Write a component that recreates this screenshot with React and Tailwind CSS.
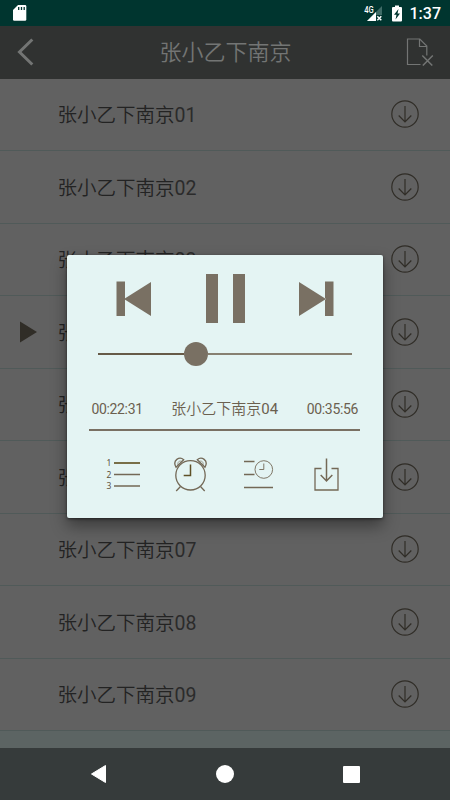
// Audio book chapter list with the playback dialog open
import React from 'react';

const TITLE = '张小乙下南京';
const chapters = ['01', '02', '03', '04', '05', '06', '07', '08', '09'];
const CURRENT = '04';

const StatusBar = () => (
  <div className="flex h-[26px] items-center justify-between bg-[#00352f] pl-[13px] pr-[9px]">
    <svg width="14" height="18" viewBox="0 0 14 18">
      <path d="M5 1h7a1.3 1.3 0 0 1 1.3 1.3v13.2a1.3 1.3 0 0 1-1.3 1.3H1.3A1.3 1.3 0 0 1 0 15.500V6z" fill="#fff" />
      <path d="M5.700 3v3M8.500 3v3M11.200 3v3" stroke="#00352f" strokeWidth="1.300" />
    </svg>
    <div className="flex items-center">
      <svg width="20" height="18" viewBox="0 0 20 18">
        <path d="M19 2v15H4z" fill="#3f6b66" />
        <path d="M13 8v9H4z" fill="#fff" />
        <path d="M13 11h6v6h-6z" fill="#00352f" />
        <path d="M14.300 12.300l4 4M18.300 12.300l-4 4" stroke="#fff" strokeWidth="1.500" />
        <text transform="scale(0.8 1)" x="1.500" y="8.500" fill="#fff" fontFamily="Roboto, sans-serif" fontSize="9.500" fontWeight="500">4G</text>
      </svg>
      <svg className="ml-[8px]" width="12" height="17" viewBox="0 0 12 17">
        <path d="M4 0.500h4v1.500h2q1 0 1 1v12.500q0 1-1 1H2q-1 0-1-1V3q0-1 1-1h2z" fill="#fff" />
        <path d="M7.500 4L3 9.800h2.500L4.500 14.500L9 8.500H6.500z" fill="#00352f" />
      </svg>
      <span className="mt-[2px] ml-[7px] font-[Roboto,sans-serif] text-[16px] leading-[24px] font-medium text-white">1:37</span>
    </div>
  </div>
);

const Header = () => (
  <div className="flex h-[52.5px] items-center justify-between bg-[#303231] pl-[17px] pr-[16px] text-[#737574]">
    <svg width="28" height="28" viewBox="0 0 28 28" fill="none" stroke="currentColor">
      <path d="M15.300 1.500L2.500 14l12.800 12.500" strokeWidth="3" />
    </svg>
    <h1 className="pt-[2px] font-[Roboto,'Noto_Sans_CJK_SC',sans-serif] text-[22px] leading-none font-[350]">{TITLE}</h1>
    <svg width="28" height="28" viewBox="0 0 28 28" fill="none" stroke="currentColor" strokeWidth="1.200">
      <path d="M14.500 26.500H1.500V1h12.300l7 7v9.500M13.500 1v7.500h7.300" />
      <path d="M16.300 17.500l10 10M26.800 17.500l-10 10" strokeWidth="1.500" />
    </svg>
  </div>
);

const ChapterRow = ({ number, playing }) => (
  <li className="flex h-[72.5px] items-center border-b border-[#505a59] bg-[#616161] pr-[31px]">
    <div className="w-[57.5px] shrink-0 pl-[20px]">
      {playing && (
        <svg width="17" height="22" viewBox="0 0 17 22">
          <path d="M0 0.500l17 10.500l-17 10.500z" fill="#302d27" />
        </svg>
      )}
    </div>
    <span className="flex-1 pt-[3px] font-[Roboto,'Noto_Sans_CJK_SC',sans-serif] text-[19.5px] leading-none font-[350] text-[#232323]">
      {TITLE}<span className="font-normal text-[#2b2b2b]">{number}</span>
    </span>
    <svg width="28" height="28" viewBox="0 0 28 28" fill="none" stroke="#302d27" strokeWidth="1.200">
      <circle cx="14" cy="14" r="13.200" />
      <path d="M14 6v16M7.700 15.500L14 22l6.300-6.500" />
    </svg>
  </li>
);

const NavBar = () => (
  <div className="flex h-[52px] items-center justify-between bg-[#363b3b] pl-[90px] pr-[90px]">
    <svg width="17" height="20" viewBox="0 0 17 20">
      <path d="M15.500 1.500v17L1.500 10z" fill="#fff" stroke="#fff" strokeWidth="1" strokeLinejoin="round" />
    </svg>
    <div className="h-[18px] w-[18px] rounded-full bg-white" />
    <div className="h-[17px] w-[17px] rounded-[1px] bg-white" />
  </div>
);

const Transport = () => (
  <div className="flex h-[49px] items-center justify-between pl-[49px] pr-[49px] text-[#797063]">
    <svg width="35" height="36" viewBox="0 0 35 36" fill="currentColor">
      <path d="M0.500 0.500h8.500v34.500H0.500zM35 1v34L8 18z" />
    </svg>
    <div className="flex gap-[15px]">
      <div className="h-[49px] w-[12px] bg-[#797063]" />
      <div className="h-[49px] w-[12px] bg-[#797063]" />
    </div>
    <svg width="35" height="36" viewBox="0 0 35 36" fill="currentColor">
      <path d="M26 0.500h8.500v34.500H26zM0 1v34l27-17z" />
    </svg>
  </div>
);

const SeekBar = () => (
  <div className="mt-[19px] ml-[31px] flex h-[24px] w-[254px] items-center">
    <div className="h-[2px] w-[86px] bg-[#665a47]" />
    <div className="h-[24px] w-[24px] rounded-full bg-[#797063]" />
    <div className="h-[2px] flex-1 bg-[#878071]" />
  </div>
);

const Actions = () => (
  <div className="mt-[26.5px] flex h-[36px] items-start pl-[39px] text-[#736856]">
    <div className="flex w-[34px] gap-[2.5px]">
      <div className="flex w-[5px] flex-col pl-[0.5px] font-['Noto_Sans',sans-serif] text-[8.5px] leading-[11.6px] text-[#5e5340]">
        <span>1</span>
        <span>2</span>
        <span>3</span>
      </div>
      <svg width="26" height="36" viewBox="0 0 26 36" stroke="currentColor" strokeWidth="1.500">
        <path d="M0 6h26" stroke="#54430f" />
        <path d="M0 17.500h26M0 29h26" />
      </svg>
    </div>
    <svg className="ml-[34px]" width="34" height="36" viewBox="0 0 34 36" fill="none" stroke="currentColor" strokeWidth="1.300">
      <circle cx="16.500" cy="18.300" r="14.700" />
      <path d="M16.500 7.500v11H9.700" stroke="#5e5027" strokeWidth="1.500" />
      <path d="M6.500 29.500L2.200 34M26.500 29.500l4.200 4.500" />
      <path d="M2 10.200L9.700 2.800C5.700-1-2 3 2 10.200zM31 10.200L23.300 2.800C27.300-1 35 3 31 10.200z" />
      <path d="M4 8.200C3.300 5 5 3.500 7.800 4.300M29 8.200C29.700 5 28 3.500 25.200 4.300" strokeWidth="0.600" />
    </svg>
    <svg className="ml-[35px]" width="31" height="36" viewBox="0 0 31 36" fill="none" stroke="currentColor">
      <path d="M1 4.500h10.500M1 17.500h10.500M1 30.500h29" strokeWidth="1.500" />
      <circle cx="20.800" cy="12.500" r="8.800" strokeWidth="0.900" />
      <path d="M20.800 6.500v6h-4.500" strokeWidth="0.900" />
    </svg>
    <svg className="ml-[39px]" width="26" height="36" viewBox="0 0 26 36" fill="none" stroke="currentColor" strokeWidth="1.500">
      <path d="M8.500 11.500H2v21.500h23V11.500h-6.500" strokeWidth="1.300" />
      <path d="M13.500 1.500v22.500M7.700 18l5.800 6l5.800-6" />
    </svg>
  </div>
);

const PlayerDialog = () => (
  <div className="absolute top-[255px] left-[67px] h-[263px] w-[316px] rounded-[2px] bg-[#e4f4f3] pt-[19px] shadow-[0_8px_16px_rgba(0,0,0,0.4),0_1px_3px_rgba(0,0,0,0.5)]">
    <Transport />
    <SeekBar />
    <div className="mt-[33px] ml-[22px] flex h-[20px] w-[271px] items-center justify-between pl-[2.5px] pr-[2px] font-[Roboto,'Noto_Sans_CJK_SC',sans-serif] text-[#6b604f]">
      <span className="text-[14px] leading-none font-normal tracking-[-0.35px]">00:22:31</span>
      <span className="text-[15px] leading-none font-[350]">
        {TITLE}<span className="font-normal">{CURRENT}</span>
      </span>
      <span className="text-[14px] leading-none font-normal tracking-[-0.35px]">00:35:56</span>
    </div>
    <div className="mt-[10px] ml-[22px] h-[1.5px] w-[271px] bg-[#797063]" />
    <Actions />
  </div>
);

const App = () => {
  return (
    <div className="relative flex h-[800px] w-[450px] flex-col overflow-hidden bg-[#5c6463]">
      <StatusBar />
      <Header />
      <ul className="flex-1">
        {chapters.map((number) => (
          <ChapterRow key={number} number={number} playing={number === CURRENT} />
        ))}
      </ul>
      <NavBar />
      <PlayerDialog />
    </div>
  );
};

export default App;
